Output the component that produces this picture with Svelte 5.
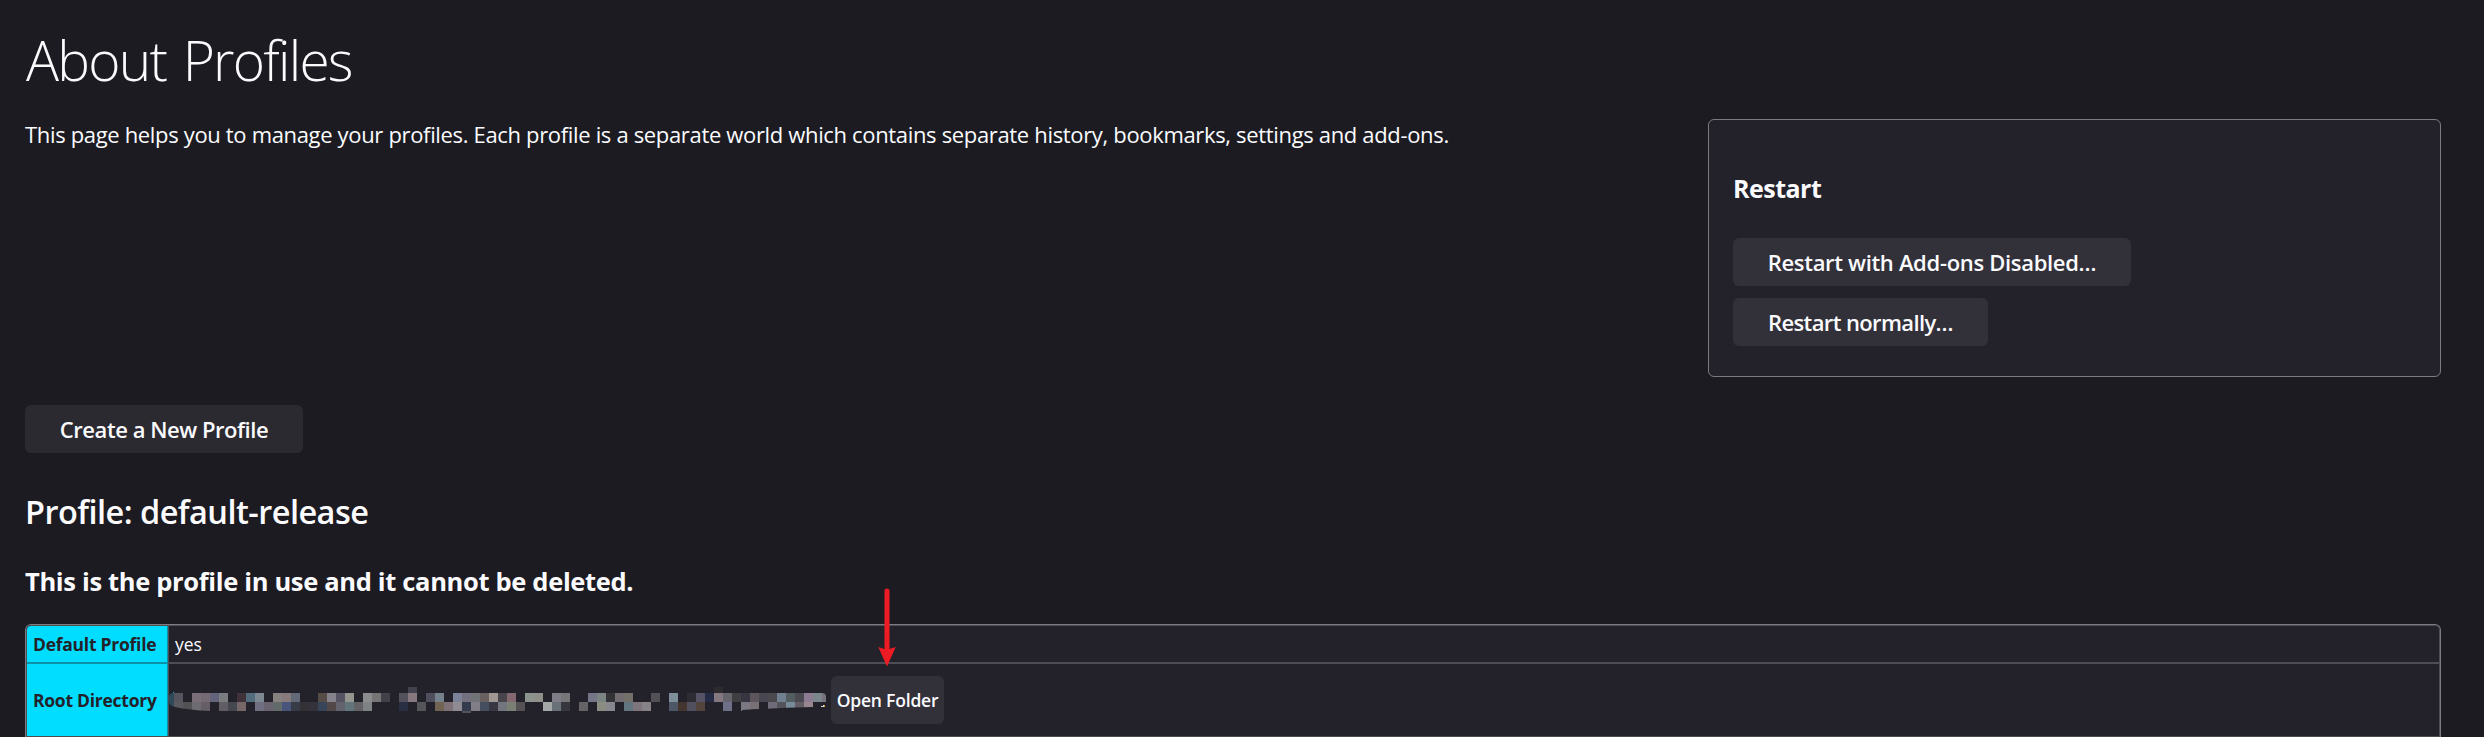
<script>
  // Redacted path: two rows of 9px blocks, "-" marks an empty cell.
  const top = ('2e4a58 56545e - 7a6f78 736a73 636479 7b7c80 - 3f3238 536c7b 7c878f - 85817f 867a7b 636976 - - 554c45 86828b 555364 959590 - 8b8c8e 767475 42414a - 52515c 85797f - 4f4e5c 74818a - 7c8297 74707f 717376 69615f a29893 49464b 84686f - 8b948f 8e9089 - 7f7d87 77777a - - 747587 7a8581 333236 726c70 737069 - - 525055 - 7d8f99 - 2e2c33 555365 252b44 85777f 66656e 3f3e40 363541 5c555c 494751 4b494e 70808f 535c5f 4b4a50 8b7c91 7a868c 77747f').split(' ');
  const bottom = ('2e4a58 5b5860 525154 6c6c72 655e66 - 615d65 45484f 766769 - 706f82 6a6370 626b69 49547a 383c48 333136 34333b 374459 514847 63636d 61757a 636266 7f8282 - - - 293044 - 555659 - 706352 7d7076 8e8c92 353b4e 817e87 454e5e 3a3744 74767f 7b8074 555154 - - a3a7a5 687078 36363e - 656366 - 8b8d83 87878f - 63757f 7f757c 878286 - - 4e5765 44352f 51505f 53443d - - 6d7087 - 7c7883 787074 - 6f6b79 565259 788b98 625d65 98858d').split(' ');
  const blocks = [top, bottom].flatMap((row, r) =>
    row.map((c, k) => ({ c, x: k * 9, y: 7 + r * 9 })).filter((b) => b.c !== '-')
  );
</script>

<main>
  <h1>About Profiles</h1>
  <section class="intro">
    <p>This page helps you to manage your profiles. Each profile is a separate world which contains separate history, bookmarks, settings and add-ons.</p>
    <aside>
      <h3>Restart</h3>
      <button class="safe">Restart with Add-ons Disabled…</button>
      <button class="normal">Restart normally…</button>
    </aside>
  </section>
  <button class="create">Create a New Profile</button>
  <h2>Profile: default-release</h2>
  <h3 class="notice">This is the profile in use and it cannot be deleted.</h3>
  <div class="table">
    <div class="row first">
      <div class="th">Default Profile</div>
      <div class="td yes">yes</div>
    </div>
    <div class="row second">
      <div class="th">Root Directory</div>
      <div class="td">
        <svg class="path" width="662" height="28" viewBox="4 0 662 28">
          <clipPath id="edge">
            <path d="M4 10Q5 7 9 7V0H651V7H657Q661 7 661 11V18Q660 20 656 21H647Q610 22 577 24V28H45V25Q24 24 10 21Q4 20 4 15Z" />
          </clipPath>
          <g clip-path="url(#edge)" shape-rendering="crispEdges">
            {#each blocks as b}
              <rect x={b.x} y={b.y} width="9" height="9" fill={'#' + b.c} />
            {/each}
            <rect x="243" y="1" width="9" height="6" fill="#42424f" />
            <rect x="549" y="1" width="9" height="6" fill="#2d2b30" />
            <rect x="297" y="25" width="9" height="2" fill="#50515a" />
          </g>
          <rect x="8" y="6" width="1" height="1" fill="#00b8d0" />
          <path d="M656 20h2v-1h2v2h-4z" fill="#d9d5cf" />
          <path d="M659 19h1v2h-1z" fill="#d79a3a" />
        </svg>
        <div class="open-wrap">
          <button class="open">Open Folder</button>
          <svg class="arrow" width="20" height="80" viewBox="0 0 20 80">
            <path d="M7.500 3Q7.500 .5 10 .5T12.500 3V61L18.700 59L10 78.500L1.300 59L7.500 61Z" fill="#ed1c24" />
          </svg>
        </div>
      </div>
    </div>
  </div>
</main>

<style>
  :global(body) {
    background: #1c1b22;
    overflow: hidden;
  }
  main {
    box-sizing: border-box;
    height: 737px;
    overflow: hidden;
    padding: 22px 43px 0 25px;
    color: #fbfbfe;
    font-family: "Open Sans", "Noto Sans", sans-serif;
    font-size: 22px;
  }
  h1, h2, h3, p { margin: 0; }
  h1 {
    font-size: 55px;
    font-weight: 300;
    line-height: 76px;
    letter-spacing: -1.75px;
    word-spacing: 4px;
    padding-left: 1px;
  }
  .intro {
    display: flex;
    justify-content: space-between;
    margin-top: 21px;
  }
  p {
    line-height: 31px;
    letter-spacing: -0.336px;
    white-space: nowrap;
  }
  aside {
    box-sizing: border-box;
    width: 733px;
    height: 258px;
    padding: 50px 24px 0;
    border: 1px solid #7c7b81;
    border-radius: 6px;
    background: #23222b;
    display: flex;
    flex-direction: column;
    align-items: flex-start;
  }
  h3 {
    font-size: 25px;
    font-weight: 700;
    line-height: 36px;
    letter-spacing: -0.52px;
  }
  aside h3 { margin-bottom: 32px; }
  button {
    display: block;
    box-sizing: border-box;
    height: 48px;
    margin: 0 0 12px;
    padding: 0;
    border: 0;
    border-radius: 6px;
    background: #32313a;
    color: inherit;
    font: 600 22px "Open Sans", "Noto Sans", sans-serif;
    white-space: nowrap;
  }
  .safe { width: 398px; letter-spacing: -0.32px; }
  .normal { width: 255px; letter-spacing: -0.62px; }
  .create {
    width: 278px;
    margin: 28px 0 0;
    background: #2b2a31;
    letter-spacing: -0.45px;
  }
  h2 {
    margin-top: 37px;
    font-size: 32.5px;
    font-weight: 600;
    line-height: 44px;
    letter-spacing: -0.54px;
  }
  .notice {
    margin-top: 29px;
    font-size: 25.5px;
    letter-spacing: -0.33px;
  }
  .table {
    margin-top: 25px;
    border: 1px solid #7c7b81;
    border-bottom: 0;
    border-radius: 6px 6px 0 0;
    background: #23222b;
    font-size: 17.5px;
  }
  .row {
    display: flex;
    box-sizing: border-box;
    border: 1px solid #4e4d54;
    border-top-width: 0;
  }
  .first {
    height: 39px;
    border-top-width: 1px;
    border-bottom-width: 2px;
    border-radius: 5px 5px 0 0;
  }
  .second { height: 73px; }
  .th {
    box-sizing: border-box;
    width: 141px;
    padding-left: 6px;
    border-right: 1px solid #0c92a8;
    background: #00ddff;
    color: #23222b;
    font-weight: 700;
    letter-spacing: -0.26px;
    display: flex;
    align-items: center;
  }
  .first .th {
    margin-bottom: -2px;
    border-bottom: 2px solid #0c92a8;
    border-top-left-radius: 4px;
  }
  .td {
    flex: 1;
    display: flex;
    align-items: center;
    border-left: 1px solid #4e4d54;
  }
  .yes { padding-left: 6px; }
  .path { display: block; }
  .open-wrap { position: relative; }
  .open {
    width: 113px;
    margin: 0;
    font-size: 17.5px;
    letter-spacing: -0.19px;
  }
  .arrow {
    position: absolute;
    left: 46px;
    top: -88px;
  }
</style>
